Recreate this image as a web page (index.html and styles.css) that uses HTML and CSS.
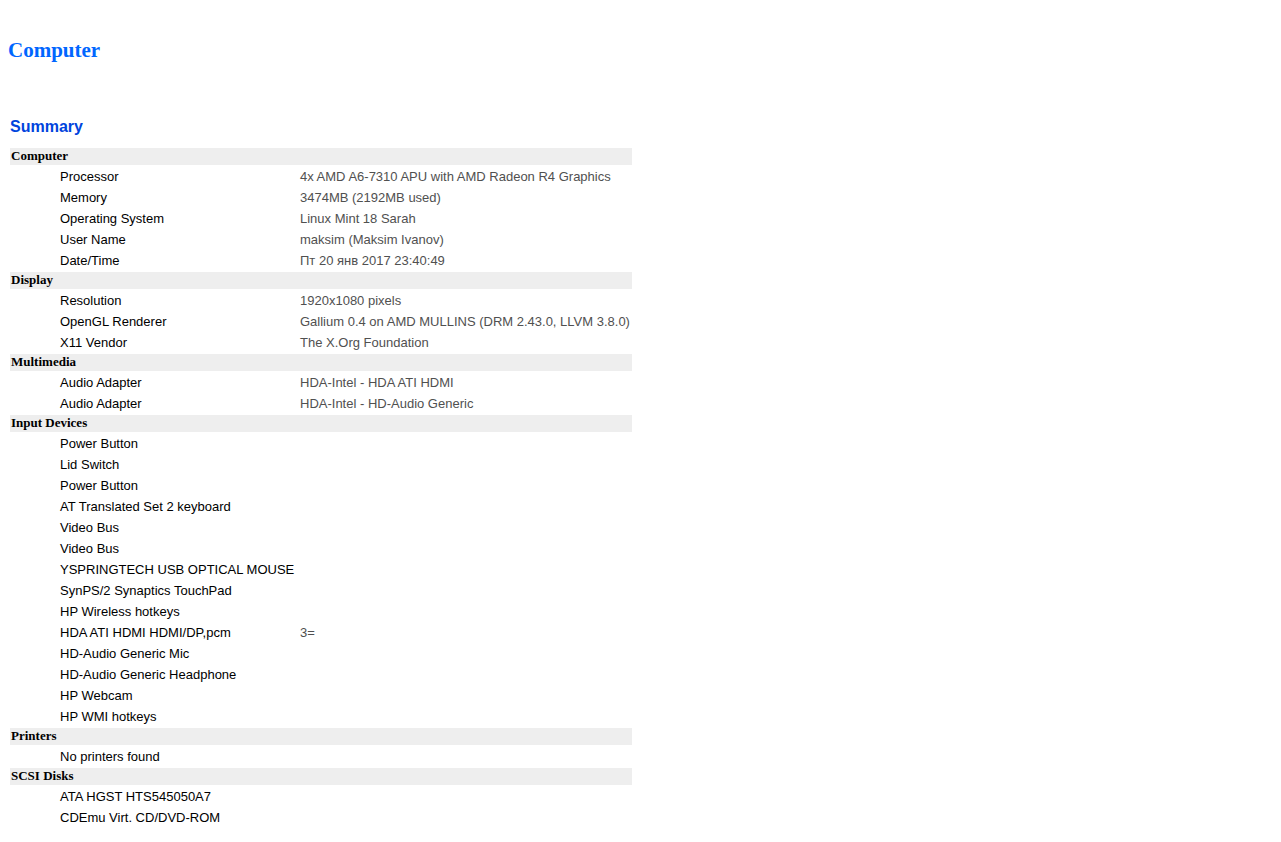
FILE: index.html
```html
<!DOCTYPE html>
<html lang="en">
<head>
    <meta charset="UTF-8">
    <title>Computer - Summary</title>
    <link rel="stylesheet" href="styles.css">
</head>
<body>
    <div class="title">Computer</div>
    <div class="stitle">Summary</div>
    <table class="report">
        <colgroup>
            <col class="col-field">
            <col class="col-value">
        </colgroup>
        <tr><td colspan="2" class="sstitle">Computer</td></tr>
        <tr><td class="field">Processor</td><td class="value">4x AMD A6-7310 APU with AMD Radeon R4 Graphics</td></tr>
        <tr><td class="field">Memory</td><td class="value">3474MB (2192MB used)</td></tr>
        <tr><td class="field">Operating System</td><td class="value">Linux Mint 18 Sarah</td></tr>
        <tr><td class="field">User Name</td><td class="value">maksim (Maksim Ivanov)</td></tr>
        <tr><td class="field">Date/Time</td><td class="value">Пт 20 янв 2017 23:40:49</td></tr>

        <tr><td colspan="2" class="sstitle">Display</td></tr>
        <tr><td class="field">Resolution</td><td class="value">1920x1080 pixels</td></tr>
        <tr><td class="field">OpenGL Renderer</td><td class="value">Gallium 0.4 on AMD MULLINS (DRM 2.43.0, LLVM 3.8.0)</td></tr>
        <tr><td class="field">X11 Vendor</td><td class="value">The X.Org Foundation</td></tr>

        <tr><td colspan="2" class="sstitle">Multimedia</td></tr>
        <tr><td class="field">Audio Adapter</td><td class="value">HDA-Intel - HDA ATI HDMI</td></tr>
        <tr><td class="field">Audio Adapter</td><td class="value">HDA-Intel - HD-Audio Generic</td></tr>

        <tr><td colspan="2" class="sstitle">Input Devices</td></tr>
        <tr><td class="field">Power Button</td><td class="value"></td></tr>
        <tr><td class="field">Lid Switch</td><td class="value"></td></tr>
        <tr><td class="field">Power Button</td><td class="value"></td></tr>
        <tr><td class="field">AT Translated Set 2 keyboard</td><td class="value"></td></tr>
        <tr><td class="field">Video Bus</td><td class="value"></td></tr>
        <tr><td class="field">Video Bus</td><td class="value"></td></tr>
        <tr><td class="field">YSPRINGTECH USB OPTICAL MOUSE</td><td class="value"></td></tr>
        <tr><td class="field">SynPS/2 Synaptics TouchPad</td><td class="value"></td></tr>
        <tr><td class="field">HP Wireless hotkeys</td><td class="value"></td></tr>
        <tr><td class="field">HDA ATI HDMI HDMI/DP,pcm</td><td class="value">3=</td></tr>
        <tr><td class="field">HD-Audio Generic Mic</td><td class="value"></td></tr>
        <tr><td class="field">HD-Audio Generic Headphone</td><td class="value"></td></tr>
        <tr><td class="field">HP Webcam</td><td class="value"></td></tr>
        <tr><td class="field">HP WMI hotkeys</td><td class="value"></td></tr>

        <tr><td colspan="2" class="sstitle">Printers</td></tr>
        <tr><td class="field">No printers found</td><td class="value"></td></tr>

        <tr><td colspan="2" class="sstitle">SCSI Disks</td></tr>
        <tr><td class="field">ATA HGST HTS545050A7</td><td class="value"></td></tr>
        <tr><td class="field">CDEmu Virt. CD/DVD-ROM</td><td class="value"></td></tr>
    </table>
</body>
</html>
```

FILE: styles.css
```css
body {
    margin: 0;
    padding: 8px;
    background: #fff;
}

.title {
    font: bold 21px/24px "Liberation Serif", serif;
    color: #0066ff;
    padding: 30px 0 0 0;
}

.stitle {
    font: bold 16px/18px "Liberation Sans", Arial, sans-serif;
    color: #0044dd;
    padding: 56px 0 0 2px;
}

.report {
    border-collapse: separate;
    border-spacing: 0 2px;
    margin: 10px 0 0 2px;
    width: 622px;
    table-layout: fixed;
}

.col-field {
    width: 290px;
}

.col-value {
    width: 332px;
}

.report td {
    padding: 0;
    white-space: nowrap;
}

.report td.sstitle {
    font: bold 13px/15px "Liberation Serif", serif;
    color: #000;
    background: #eeeeee;
    height: 15px;
    padding: 0 0 2px 1px;
}

.report td.field {
    font: 13px/19px "Liberation Sans", Arial, sans-serif;
    color: #000;
    height: 19px;
    padding-left: 50px;
}

.value {
    font: 13px/19px "Liberation Sans", Arial, sans-serif;
    color: #505050;
}
```
